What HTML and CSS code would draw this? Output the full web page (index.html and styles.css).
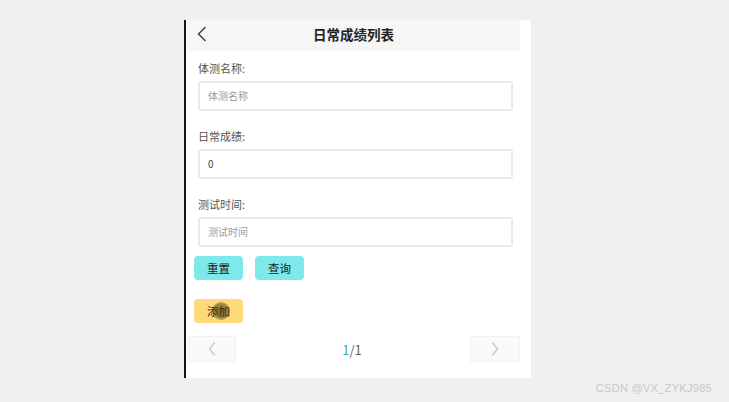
FILE: index.html
```html
<!DOCTYPE html>
<html lang="zh">
<head>
<meta charset="utf-8">
<title>日常成绩列表</title>
<link rel="stylesheet" href="styles.css">
</head>
<body>
<div class="phone">
  <div class="screen">
    <div class="header">
      <span class="back"><svg width="12" height="16" viewBox="0 0 12 16"><polyline points="9,1.5 2.5,8 9,14.5" fill="none" stroke="#444" stroke-width="1.6" stroke-linecap="round" stroke-linejoin="round"/></svg></span>
      <span class="title">日常成绩列表</span>
    </div>
    <div class="form">
      <div class="group">
        <div class="label">体测名称:</div>
        <div class="input placeholder">体测名称</div>
      </div>
      <div class="group">
        <div class="label">日常成绩:</div>
        <div class="input">0</div>
      </div>
      <div class="group">
        <div class="label">测试时间:</div>
        <div class="input placeholder">测试时间</div>
      </div>
    </div>
    <div class="btn-row">
      <div class="btn cyan">重置</div>
      <div class="btn cyan">查询</div>
    </div>
    <div class="btn-row add-row">
      <div class="btn yellow">添加<span class="touch"></span></div>
    </div>
    <div class="pager">
      <div class="pbtn"><svg width="10" height="16" viewBox="0 0 10 16"><polyline points="7.5,2 2.5,8 7.5,14" fill="none" stroke="#c8c8c8" stroke-width="1.4" stroke-linecap="round" stroke-linejoin="round"/></svg></div>
      <div class="pnum"><span class="cur">1</span>/1</div>
      <div class="pbtn next"><svg width="10" height="16" viewBox="0 0 10 16"><polyline points="2.5,2 7.5,8 2.5,14" fill="none" stroke="#c8c8c8" stroke-width="1.4" stroke-linecap="round" stroke-linejoin="round"/></svg></div>
    </div>
  </div>
</div>
<div class="watermark">CSDN @VX_ZYKJ985</div>
</body>
</html>
```

FILE: styles.css
```css
* { box-sizing: border-box; }
html, body { margin: 0; padding: 0; }
body {
  background: #f0f0f0;
  font-family: "Noto Sans CJK SC", "Noto Sans", sans-serif;
  color: #333;
  padding-top: 20px;
  width: 729px;
  height: 402px;
  overflow: hidden;
}
.phone {
  margin-left: 184px;
  width: 347px;
  height: 358px;
  background: #fff;
  border-left: 2px solid #151515;
  padding-left: 1px;
}
.screen {
  width: 333px;
}
.header {
  height: 31px;
  background: #f6f6f6;
  display: flex;
  align-items: center;
  justify-content: center;
  position: relative;
}
.title {
  font-size: 13.5px;
  font-weight: 700;
  color: #222;
  margin-top: -3px;
}
.back {
  position: absolute;
  left: 9px;
  top: 6px;
  display: flex;
}
.form {
  padding: 7px 0 0 11px;
}
.group { margin-bottom: 15px; }
.group:last-child { margin-bottom: 0; }
.label {
  height: 20px;
  line-height: 20px;
  font-size: 11px;
  color: #555;
  margin-bottom: 3px;
}
.input {
  width: 315px;
  height: 30px;
  border: 2px solid #e9e9e9;
  border-radius: 3px;
  padding-left: 8px;
  font-size: 10px;
  line-height: 26px;
  color: #444;
}
.input.placeholder { color: #9a9a9a; }
.btn-row {
  display: flex;
  gap: 12px;
  padding-left: 7px;
  margin-top: 9px;
}
.add-row { margin-top: 19px; }
.btn {
  position: relative;
  width: 49px;
  height: 24px;
  border-radius: 4px;
  font-size: 11.5px;
  line-height: 24px;
  text-align: center;
  color: #222;
}
.cyan { background: #7de9ea; }
.yellow { background: #fdd97a; }
.touch {
  position: absolute;
  left: 18px;
  top: 3px;
  width: 18px;
  height: 18px;
  border-radius: 50%;
  background: radial-gradient(circle, rgba(70,55,10,0.75) 0%, rgba(90,70,15,0.55) 55%, rgba(120,95,30,0) 100%);
}
.pager {
  margin-top: 13px;
  height: 26px;
  display: flex;
  align-items: center;
  justify-content: space-between;
  padding-left: 1px;
}
.pbtn {
  width: 48px;
  height: 26px;
  background: #fafafa;
  border: 1px solid #f3f3f3;
  display: flex;
  align-items: center;
  justify-content: center;
}
.pbtn.next { width: 50px; }
.pnum {
  font-size: 13px;
  color: #666;
  margin-right: 2px;
}
.pnum .cur { color: #4aa3b8; }
.watermark {
  text-align: right;
  padding-right: 17px;
  margin-top: 4px;
  font-family: "Liberation Sans", sans-serif;
  font-size: 11px;
  color: #c8c8c8;
  letter-spacing: 0.3px;
}
```
